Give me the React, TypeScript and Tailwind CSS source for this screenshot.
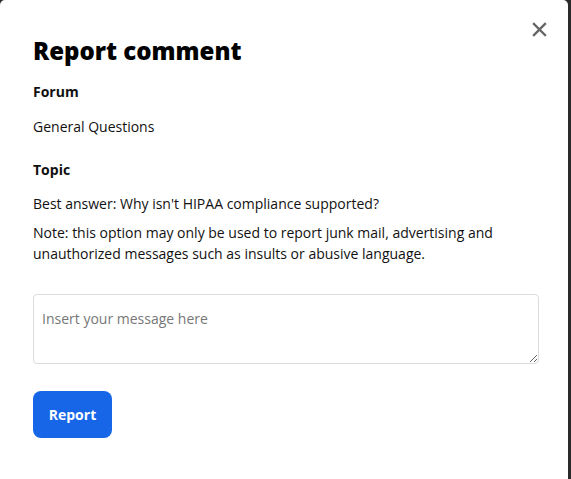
export default function App() {
  return (
    <div className="h-[479px] w-[571px] overflow-hidden bg-[#2a2a2a]" style={{ fontFamily: '"Open Sans", sans-serif' }}>
      <div className="relative h-[490px] w-[568px] rounded-[5px] bg-white px-[33px] pt-[33px] text-[#111]">
        <button className="absolute right-[21px] top-[22px] text-[#666]" aria-label="Close">
          <svg width="15" height="15" viewBox="0 0 15 15">
            <path d="M2 2L13 13M13 2L2 13" stroke="currentColor" strokeWidth="2.4" strokeLinecap="square" />
          </svg>
        </button>
        <h2 className="text-[24px] font-extrabold leading-[36px] text-black">Report comment</h2>
        <h3 className="mt-[11px] text-[14px] font-bold leading-[24px]">Forum</h3>
        <p className="mt-[11px] text-[14px] leading-[24px]">General Questions</p>
        <h3 className="mt-[19px] text-[14px] font-bold leading-[24px]">Topic</h3>
        <p className="mt-[10px] text-[14px] leading-[24px]">Best answer: Why isn't HIPAA compliance supported?</p>
        <p className="mt-[6px] text-[14px] leading-[21px]">
          Note: this option may only be used to report junk mail, advertising and unauthorized messages such as insults or abusive language.
        </p>
        <textarea
          placeholder="Insert your message here"
          className="mt-[30px] block h-[70px] w-[506px] rounded-[4px] border border-[#dcdcdc] px-[8px] py-[14px] text-[14px] leading-[20px] placeholder:text-[#777] focus:outline-none"
        />
        <button className="mt-[27px] h-[47px] w-[79px] rounded-[8px] bg-[#1766e8] text-[14px] font-bold text-white">Report</button>
      </div>
    </div>
  );
}
